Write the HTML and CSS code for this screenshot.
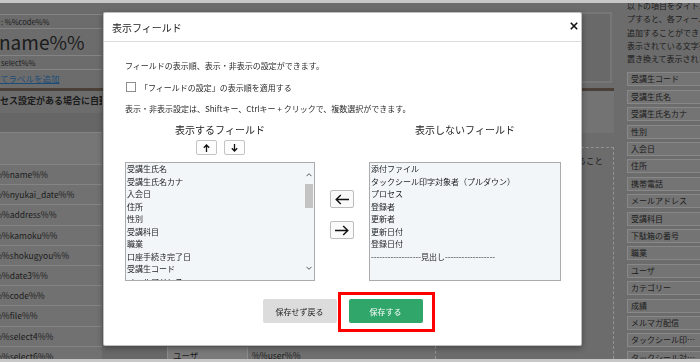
FILE: index.html
```html
<!DOCTYPE html>
<html lang="ja">
<head>
  <meta charset="UTF-8">
  <title>表示フィールド</title>
  <link rel="stylesheet" href="styles.css">
</head>
<body>

  <div class="screen">
    <div class="main">
      <div class="top">
        <div class="code-col">
          <div class="blank"></div>
          <div class="cell sm">: %%code%%</div>
          <div class="cell lg">name%%</div>
          <div class="cell sm">select%%</div>
          <div class="cell link"><a href="#">てラベルを追加</a></div>
        </div>
        <div class="top-box"></div>
      </div>
      <div class="bar"></div>
      <div class="lower">
        <div class="code-col">
          <div class="cell notice">セス設定がある場合に自動自動で反映</div>
          <div class="band dark"></div>
          <div class="band light"></div>
          <div class="cell code">%%name%%</div>
          <div class="cell code">%%nyukai_date%%</div>
          <div class="cell code">%%address%%</div>
          <div class="cell code">%%kamoku%%</div>
          <div class="cell code">%%shokugyou%%</div>
          <div class="cell code">%%date3%%</div>
          <div class="cell code">%%code%%</div>
          <div class="cell code">%%file%%</div>
          <div class="cell code">%%select4%%</div>
          <div class="cell code">%%select6%%</div>
        </div>
        <div class="gap-col"></div>
        <div class="table2">
          <div class="row2">
            <div class="c-label">ユーザ</div>
            <div class="c-val">%%user%%</div>
          </div>
        </div>
        <div class="drop-col">
          <div class="drop-head"></div>
          <div class="drop-box">
            <p>項目をここにドロップすること</p>
          </div>
        </div>
      </div>
    </div>

    <div class="side">
      <div class="side-note">
        <div>以下の項目をタイトルやメール本文にドラッ</div>
        <div>プすると、各フィールドの値を表示する変数を</div>
        <div>追加することができます。</div>
        <div>表示されている文字列は、実際のデータに</div>
        <div>置き換えて表示されます。</div>
      </div>
      <div class="tags">
        <div class="tag">受講生コード</div>
        <div class="tag">受講生氏名</div>
        <div class="tag">受講生氏名カナ</div>
        <div class="tag">性別</div>
        <div class="tag">入会日</div>
        <div class="tag">住所</div>
        <div class="tag">携帯電話</div>
        <div class="tag">メールアドレス</div>
        <div class="tag">受講科目</div>
        <div class="tag">下駄箱の番号</div>
        <div class="tag">職業</div>
        <div class="tag">ユーザ</div>
        <div class="tag">カテゴリー</div>
        <div class="tag">成績</div>
        <div class="tag">メルマガ配信</div>
        <div class="tag">タックシール印字対象者</div>
        <div class="tag">タックシール対象者</div>
      </div>
    </div>
  </div>

  <div class="modal">
    <div class="modal-head">
      <h2>表示フィールド</h2>
      <button class="close" type="button">
        <svg width="8" height="8" viewBox="0 0 8 8"><path d="M0.8 0.8L7.2 7.2M7.2 0.8L0.8 7.2" stroke="#111" stroke-width="1.6"/></svg>
      </button>
    </div>

    <div class="modal-body">
      <p class="lead">フィールドの表示順、表示・非表示の設定ができます。</p>
      <label class="check"><span class="box"></span>「フィールドの設定」の表示順を適用する</label>
      <p class="hint">表示・非表示設定は、Shiftキー、Ctrlキー + クリックで、複数選択ができます。</p>

      <div class="fields">
        <div class="f-title">表示するフィールド</div>
        <div></div>
        <div class="f-title">表示しないフィールド</div>

        <div class="order">
          <button type="button" class="sm-btn">
            <svg width="7" height="8" viewBox="0 0 7 8"><path d="M3.5 8V1M0.8 3.8L3.5 1L6.2 3.8" stroke="#111" stroke-width="1.3" fill="none"/></svg>
          </button>
          <button type="button" class="sm-btn">
            <svg width="7" height="8" viewBox="0 0 7 8"><path d="M3.5 0V7M0.8 4.2L3.5 7L6.2 4.2" stroke="#111" stroke-width="1.3" fill="none"/></svg>
          </button>
        </div>
        <div></div>
        <div></div>

        <div class="list">
          <div class="items">
            <div>受講生氏名</div>
            <div>受講生氏名カナ</div>
            <div>入会日</div>
            <div>住所</div>
            <div>性別</div>
            <div>受講科目</div>
            <div>職業</div>
            <div>口座手続き完了日</div>
            <div>受講生コード</div>
            <div>メールアドレス</div>
          </div>
          <div class="sb">
            <svg width="6" height="6" viewBox="0 0 6 6"><path d="M0.5 4.2L3 1.7L5.5 4.2" stroke="#555" stroke-width="1" fill="none"/></svg>
            <div class="thumb"></div>
            <svg class="down" width="6" height="6" viewBox="0 0 6 6"><path d="M0.5 1.8L3 4.3L5.5 1.8" stroke="#555" stroke-width="1" fill="none"/></svg>
          </div>
        </div>

        <div class="move">
          <button type="button" class="mv-btn">
            <svg width="14" height="11" viewBox="0 0 14 11"><path d="M14 5.5H1.2M5.8 1L1.2 5.5L5.8 10" stroke="#111" stroke-width="1.4" fill="none"/></svg>
          </button>
          <button type="button" class="mv-btn">
            <svg width="14" height="11" viewBox="0 0 14 11"><path d="M0 5.5H12.8M8.2 1L12.8 5.5L8.2 10" stroke="#111" stroke-width="1.4" fill="none"/></svg>
          </button>
        </div>

        <div class="list">
          <div class="items">
            <div>添付ファイル</div>
            <div>タックシール印字対象者（プルダウン）</div>
            <div>プロセス</div>
            <div>登録者</div>
            <div>更新者</div>
            <div>更新日付</div>
            <div>登録日付</div>
            <div>------------------見出し------------------</div>
          </div>
        </div>
      </div>
    </div>

    <div class="modal-foot">
      <button type="button" class="btn gray">保存せず戻る</button>
      <span class="mark"><button type="button" class="btn green">保存する</button></span>
    </div>
  </div>

</body>
</html>
```

FILE: styles.css
```css
body {
  margin: 0;
  font-family: "Noto Sans CJK JP", "Noto Sans", sans-serif;
}

/* dimmed page behind the dialog */
.screen {
  height: 362px;
  box-sizing: border-box;
  border-top: 3px solid #c7c7c7;
  border-bottom: 3px solid #c7c7c7;
  background: #6c6c6c;
  color: #1b1b1b;
  display: flex;
  overflow: hidden;
}

.main {
  width: 614px;
  flex: none;
  display: flex;
  flex-direction: column;
}

.top {
  height: 85px;
  display: flex;
}

.code-col {
  width: 102px;
  flex: none;
  overflow: hidden;
}

.blank {
  height: 11px;
  border-bottom: 1px solid #848484;
}

.cell {
  white-space: nowrap;
  overflow: hidden;
  border-bottom: 1px solid #848484;
  box-sizing: border-box;
}

.cell.sm {
  height: 14px;
  font-size: 7.5px;
  line-height: 13px;
  padding-left: 1px;
}

.cell.lg {
  height: 27px;
  font-size: 19px;
  line-height: 25px;
  margin-left: -1px;
}

.cell.link {
  height: 18px;
  font-size: 8.5px;
  line-height: 17px;
  border-bottom: none;
}

.cell.link a {
  color: #1c4d78;
}

.top-box {
  margin: 9px 2px 5px auto;
  width: 160px;
  background: #696969;
  border: 2px solid #777;
}

.bar {
  height: 3px;
  background: #4a4037;
}

.lower {
  flex: 1;
  display: flex;
  min-height: 0;
}

.cell.notice {
  height: 22px;
  font-size: 9px;
  font-weight: bold;
  line-height: 20px;
  border-bottom: none;
}

.band {
  border-bottom: 1px solid #848484;
}

.band.dark {
  height: 19px;
  background: #666;
}

.band.light {
  height: 31px;
  background: #767676;
}

.cell.code {
  height: 20.2px;
  font-size: 8.5px;
  line-height: 19px;
  text-indent: -6px;
  background: #717171;
}

.gap-col {
  width: 65px;
  flex: none;
  background: #686868;
}

.table2 {
  width: 268px;
  flex: none;
  display: flex;
  flex-direction: column;
  justify-content: flex-end;
}

.row2 {
  display: flex;
  height: 20px;
  margin-bottom: -8px;
  font-size: 8.5px;
  line-height: 17px;
  border-left: 1px solid #8a8a8a;
}

.c-label {
  width: 74px;
  padding-left: 5px;
  background: #7a7a7a;
  border-right: 1px solid #8a8a8a;
}

.c-val {
  flex: 1;
  padding-left: 4px;
  background: #6f6f6f;
}

.drop-col {
  flex: 1;
  display: flex;
  flex-direction: column;
}

.drop-head {
  height: 42px;
  background: #737373;
}

.drop-box {
  flex: 1;
  margin-top: 14px;
  border: 1px dashed #939393;
  border-bottom: none;
}

.drop-box p {
  margin: 6px 10px 0 0;
  text-align: right;
  font-size: 8.5px;
  white-space: nowrap;
  overflow: hidden;
}

.side {
  flex: 1;
  padding-left: 13px;
  overflow: hidden;
}

.side-note {
  margin-top: -4px;
  font-size: 8px;
  line-height: 13.3px;
  white-space: nowrap;
}

.tags {
  margin-top: 7px;
}

.tag {
  width: 82px;
  height: 14px;
  box-sizing: border-box;
  margin-bottom: 3.4px;
  padding: 0 6px 0 3px;
  border: 1px solid #888;
  background: #747474;
  font-size: 8px;
  line-height: 12px;
  white-space: nowrap;
  overflow: hidden;
  text-overflow: ellipsis;
}

/* dialog */
.modal {
  position: fixed;
  left: 103px;
  top: 12px;
  width: 479px;
  height: 334px;
  box-sizing: border-box;
  background: #fff;
  border: 1px solid rgba(0,0,0,0.25);
  border-radius: 2px;
  box-shadow: 0 2px 6px rgba(0,0,0,0.35);
  color: #2b2b2b;
}

.modal-head {
  height: 28px;
  display: flex;
  align-items: center;
  justify-content: space-between;
  padding: 0 3px 0 8px;
  border-bottom: 1px solid #dcdcdc;
}

.modal-head h2 {
  margin: 0;
  font-size: 10px;
  font-weight: normal;
  color: #222;
}

.close {
  border: none;
  background: none;
  padding: 0;
  margin-bottom: 3px;
  display: flex;
}

.modal-body {
  padding: 0 0 0 21px;
  font-size: 8px;
}

.lead {
  margin: 18px 0 0;
  line-height: 12px;
}

.check {
  display: flex;
  align-items: center;
  height: 12px;
  margin-top: 9px;
}

.box {
  width: 10px;
  height: 10px;
  box-sizing: border-box;
  border: 1px solid #8d8d8d;
  margin: 0 4px 0 1px;
}

.hint {
  margin: 10px 0 0;
  line-height: 12px;
}

.fields {
  margin-top: 8px;
  display: grid;
  grid-template-columns: 190px 54px 192px;
  grid-template-rows: 14px 25px 119px;
}

.f-title {
  text-align: center;
  font-size: 10px;
  line-height: 14px;
  color: #222;
}

.order {
  display: flex;
  justify-content: center;
  gap: 7px;
  padding-top: 3px;
}

.sm-btn {
  width: 21px;
  height: 15px;
  padding: 0;
  border: 1px solid #c4c4c4;
  border-radius: 2px;
  background: #fdfdfd;
  display: flex;
  align-items: center;
  justify-content: center;
}

.list {
  display: flex;
  box-sizing: border-box;
  border: 1px solid #ababab;
  background: #f2f6f9;
  overflow: hidden;
}

.items {
  flex: 1;
  padding-left: 1px;
  font-size: 8px;
  line-height: 12.5px;
  color: #1e1e1e;
  white-space: nowrap;
  overflow: hidden;
}

.sb {
  width: 10px;
  display: flex;
  flex-direction: column;
  align-items: center;
  padding: 9px 0 9px;
  box-sizing: border-box;
}

.thumb {
  width: 8px;
  height: 24px;
  margin-top: 6px;
  background: #c3c3c3;
}

.sb .down {
  margin-top: auto;
}

.move {
  display: flex;
  flex-direction: column;
  align-items: center;
  gap: 13px;
  padding-top: 28px;
}

.mv-btn {
  width: 24px;
  height: 18px;
  padding: 0;
  border: 1px solid #bdbdbd;
  border-radius: 2px;
  background: #fafafa;
  display: flex;
  align-items: center;
  justify-content: center;
}

.modal-foot {
  display: flex;
  justify-content: center;
  gap: 12px;
  margin-top: 18px;
}

.btn {
  width: 74px;
  height: 24px;
  border: none;
  border-radius: 2px;
  font-family: inherit;
  font-size: 8px;
  padding: 0;
}

.btn.gray {
  background: #dcdcdc;
  color: #222;
}

.btn.green {
  background: #30a66b;
  color: #fff;
}

/* red annotation frame round the save button */
.mark {
  position: relative;
  display: flex;
}

.mark::after {
  content: "";
  position: absolute;
  left: -11px;
  right: -12px;
  top: -7px;
  bottom: -9px;
  border: 3px solid #f00;
}
```
